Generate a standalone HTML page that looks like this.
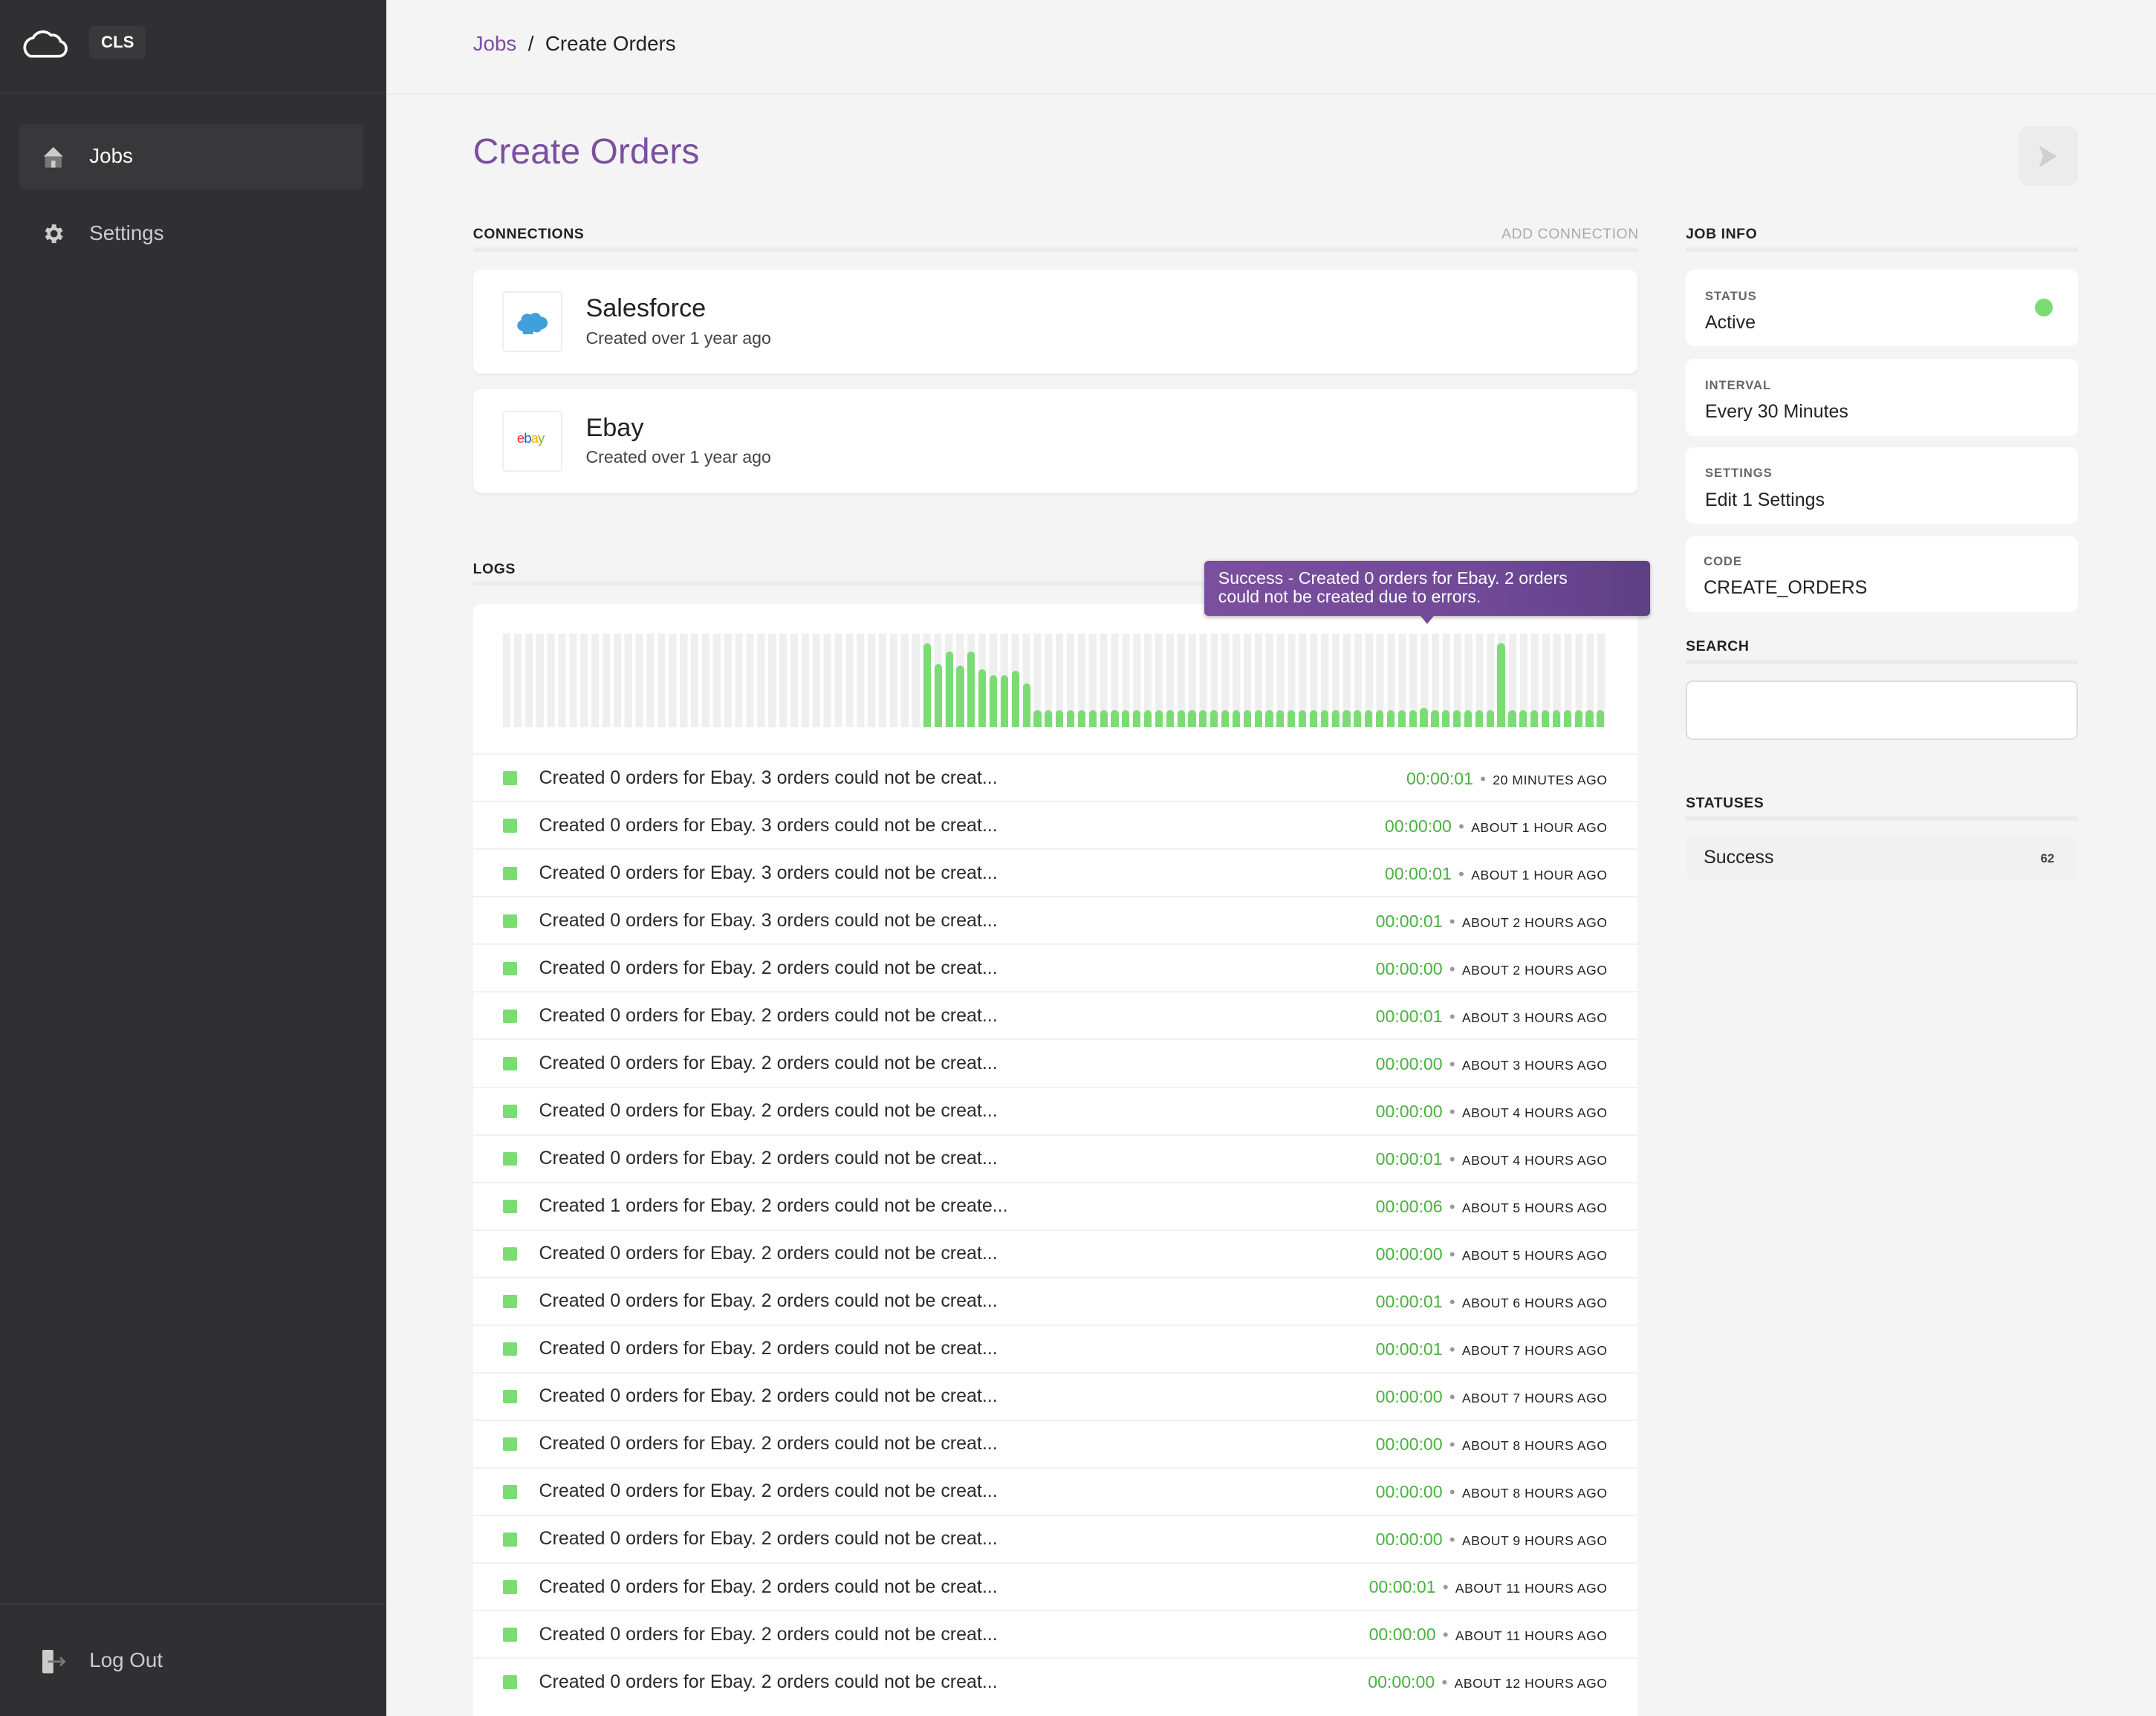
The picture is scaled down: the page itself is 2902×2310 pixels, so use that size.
<!DOCTYPE html>
<html><head><meta charset="utf-8"><style>
*{box-sizing:border-box;margin:0;padding:0}
html,body{width:2902px;height:2310px;overflow:hidden;background:#f4f4f4}
#r{zoom:1.8508;width:1568px;height:1248px;position:relative;font-family:"Liberation Sans",sans-serif;color:#222}
.a{position:absolute}
.sb{left:0;top:0;width:281px;height:1248px;background:#303032}
.lbl{font-size:10.5px;font-weight:bold;letter-spacing:.3px;color:#222}
.card{background:#fff;border-radius:6px}
.row{position:absolute;left:344px;width:847px;height:34.6px;border-top:1.5px solid #f1f1f1;background:#fff}
.row .sq{position:absolute;left:22px;top:12px;width:10px;height:10px;background:#7bdc74;border-radius:1px}
.row .t{position:absolute;left:48px;top:9px;font-size:13.5px;color:#2a2a2a}
.row .r{position:absolute;right:22px;top:10px;font-size:12px;color:#222;white-space:nowrap}
.row .r b{font-weight:normal;color:#49b13f;font-size:12.5px}
.row .r i{font-style:normal;color:#999;margin:0 5px}
.row .r s{text-decoration:none;font-size:9.5px;letter-spacing:.3px}
.g{display:inline-block;width:5.5px;margin-right:2.54px;background:#7bdc74;border-radius:3px 3px 0 0;vertical-align:bottom}
.ic{font-size:9px;color:#666;letter-spacing:.5px;font-weight:bold}
.iv{font-size:13.5px;color:#222;margin-top:6px}
</style></head><body><div id="r">
<div class="a sb">
 <svg class="a" style="left:14px;top:19px" width="36" height="24" viewBox="0 0 36 24"><path d="M8 22 H29 a5.5 5.5 0 0 0 1-10.8 a6 6 0 0 0-7-4.5 a8 8 0 0 0-13 2 A7 7 0 0 0 8 22 Z" fill="none" stroke="#fff" stroke-width="2"/></svg>
 <div class="a" style="left:65px;top:19px;width:41px;height:24px;background:#39393b;border-radius:4px;color:#fff;font-size:12px;font-weight:bold;text-align:center;line-height:24px">CLS</div>
 <div class="a" style="left:0;top:67px;width:281px;height:1px;background:#39393b"></div>
 <div class="a" style="left:14px;top:90px;width:250px;height:48px;background:#38383a;border-radius:4px"></div>
 <svg class="a" style="left:31px;top:106px" width="16" height="17" viewBox="0 0 16 17"><path d="M8 1 L15 8 H1 Z" fill="#ccc"/><rect x="2" y="8" width="12" height="8" fill="#777"/><rect x="6.5" y="11" width="3" height="5" fill="#ccc"/></svg>
 <div class="a" style="left:65px;top:105px;color:#fff;font-size:15px">Jobs</div>
 <svg class="a" style="left:30px;top:161px" width="18" height="18" viewBox="0 0 24 24"><path fill="#ccc" d="M19.4 13a7.5 7.5 0 0 0 0-2l2.1-1.6-2-3.5-2.5 1a7.6 7.6 0 0 0-1.700-1L15 3h-4l-.4 2.900a7.600 7.600 0 0 0-1.700 1l-2.500-1-2 3.500L6.500 11a7.500 7.500 0 0 0 0 2l-2.100 1.600 2 3.500 2.500-1a7.600 7.600 0 0 0 1.700 1L11 21h4l.4-2.900a7.600 7.600 0 0 0 1.700-1l2.500 1 2-3.500zM13 15.500a3.500 3.500 0 1 1 0-7 3.500 3.500 0 0 1 0 7z" transform="translate(-1 0)"/></svg>
 <div class="a" style="left:65px;top:161px;color:#ccc;font-size:15px">Settings</div>
 <div class="a" style="left:0;top:1166px;width:281px;height:1px;background:#39393b"></div>
 <svg class="a" style="left:31px;top:1200px" width="18" height="18" viewBox="0 0 18 18"><rect x="0" y="0" width="8" height="17" rx="1" fill="#ccc"/><path d="M4 8.5 H16 M13 5.5 L16 8.5 L13 11.5" stroke="#777" stroke-width="1.5" fill="none"/></svg>
 <div class="a" style="left:65px;top:1199px;color:#ccc;font-size:15px">Log Out</div>
</div>
<div class="a" style="left:281px;top:68px;width:1287px;height:1px;background:#ebebeb"></div>
<div class="a" style="left:344px;top:23px;font-size:15px"><span style="color:#7b4fa0">Jobs</span> &nbsp;/&nbsp; <span style="color:#222">Create Orders</span></div>
<div class="a" style="left:344px;top:95px;font-size:26px;color:#7b4fa0">Create Orders</div>
<div class="a" style="left:1468px;top:92px;width:43px;height:43px;background:#ececec;border-radius:7px"></div>
<svg class="a" style="left:1480px;top:104px" width="20" height="20" viewBox="0 0 20 20"><path d="M3 2 L16 10 L3 18 L6 10 Z" fill="#cfcfcf"/><path d="M3 2 L6 10 L4.5 6 Z" fill="#555"/></svg>

<div class="a lbl" style="left:344px;top:164px">CONNECTIONS</div>
<div class="a" style="left:1092px;top:164px;font-size:10.5px;color:#aaa;letter-spacing:.3px">ADD CONNECTION</div>
<div class="a" style="left:344px;top:180px;width:847px;height:3px;background:#ebebeb"></div>
<div class="a card" style="left:344px;top:196px;width:847px;height:76px;box-shadow:0 1px 2px rgba(0,0,0,.06)"></div>
<div class="a" style="left:365px;top:212px;width:44px;height:44px;border:1.5px solid #eee;border-radius:3px;background:#fff"></div>
<svg class="a" style="left:375px;top:225px" width="24" height="18" viewBox="0 0 24 18"><path d="M5 16 a4 4 0 0 1-1-7.8 a4.5 4.5 0 0 1 7-4 a4.5 4.5 0 0 1 7.5 1.5 a4.5 4.5 0 0 1 .5 9 a4 4 0 0 1-6 1.5 a4 4 0 0 1-8-.2z" fill="#3fa0dc"/></svg>
<div class="a" style="left:426px;top:214px;font-size:18.5px;color:#222">Salesforce</div>
<div class="a" style="left:426px;top:239px;font-size:12.5px;color:#444">Created over 1 year ago</div>
<div class="a card" style="left:344px;top:283px;width:847px;height:76px;box-shadow:0 1px 2px rgba(0,0,0,.06)"></div>
<div class="a" style="left:365px;top:299px;width:44px;height:44px;border:1.5px solid #eee;border-radius:3px;background:#fff"></div>
<div class="a" style="left:376px;top:313px;font-size:10px;letter-spacing:-.5px"><span style="color:#e53238">e</span><span style="color:#0064d2">b</span><span style="color:#f5af02">a</span><span style="color:#86b817">y</span></div>
<div class="a" style="left:426px;top:301px;font-size:18.5px;color:#222">Ebay</div>
<div class="a" style="left:426px;top:325px;font-size:12.5px;color:#444">Created over 1 year ago</div>

<div class="a lbl" style="left:344px;top:408px">LOGS</div>
<div class="a" style="left:344px;top:423px;width:847px;height:3px;background:#ebebeb"></div>
<div class="a" style="left:344px;top:439px;width:847px;height:820px;background:#fff;border-radius:6px 6px 0 0"></div>
<div class="a" style="left:366px;top:461px;width:804px;height:68px;background:repeating-linear-gradient(to right,#efefef 0 5.5px,transparent 5.5px 8.04px)"></div>
<div class="a" style="left:671.5px;top:461px;width:500px;height:68px;font-size:0;line-height:0;white-space:nowrap;display:flex;align-items:flex-end">
<span class="g" style="height:61px"></span><span class="g" style="height:46px"></span><span class="g" style="height:55px"></span><span class="g" style="height:45px"></span><span class="g" style="height:55px"></span><span class="g" style="height:42px"></span><span class="g" style="height:38px"></span><span class="g" style="height:38px"></span><span class="g" style="height:41px"></span><span class="g" style="height:32px"></span>
<span class="g" style="height:12.5px"></span><span class="g" style="height:12.5px"></span><span class="g" style="height:12.5px"></span><span class="g" style="height:12.5px"></span><span class="g" style="height:12.5px"></span><span class="g" style="height:12.5px"></span><span class="g" style="height:12.5px"></span><span class="g" style="height:12.5px"></span><span class="g" style="height:12.5px"></span><span class="g" style="height:12.5px"></span>
<span class="g" style="height:12.5px"></span><span class="g" style="height:12.5px"></span><span class="g" style="height:12.5px"></span><span class="g" style="height:12.5px"></span><span class="g" style="height:12.5px"></span><span class="g" style="height:12.5px"></span><span class="g" style="height:12.5px"></span><span class="g" style="height:12.5px"></span><span class="g" style="height:12.5px"></span><span class="g" style="height:12.5px"></span>
<span class="g" style="height:12.5px"></span><span class="g" style="height:12.5px"></span><span class="g" style="height:12.5px"></span><span class="g" style="height:12.5px"></span><span class="g" style="height:12.5px"></span><span class="g" style="height:12.5px"></span><span class="g" style="height:12.5px"></span><span class="g" style="height:12.5px"></span><span class="g" style="height:12.5px"></span><span class="g" style="height:12.5px"></span>
<span class="g" style="height:12.5px"></span><span class="g" style="height:12.5px"></span><span class="g" style="height:12.5px"></span><span class="g" style="height:12.5px"></span><span class="g" style="height:12.5px"></span><span class="g" style="height:14px"></span><span class="g" style="height:12.5px"></span><span class="g" style="height:12.5px"></span><span class="g" style="height:12.5px"></span><span class="g" style="height:12.5px"></span>
<span class="g" style="height:12.5px"></span><span class="g" style="height:12.5px"></span><span class="g" style="height:61px"></span><span class="g" style="height:12.5px"></span><span class="g" style="height:12.5px"></span><span class="g" style="height:12.5px"></span><span class="g" style="height:12.5px"></span><span class="g" style="height:12.5px"></span><span class="g" style="height:12.5px"></span><span class="g" style="height:12.5px"></span>
<span class="g" style="height:12.5px"></span><span class="g" style="height:12.5px"></span>
</div>
<div class="a" style="left:876px;top:408px;width:324px;height:40px;background:linear-gradient(90deg,#7a4f9e,#714a98 60%,#5d3f84);border-radius:3px;color:#fff;font-size:12.5px;line-height:13.5px;padding:6px 40px 6px 10px;box-shadow:0 1px 3px rgba(0,0,0,.3)">Success - Created 0 orders for Ebay. 2 orders could not be created due to errors.</div>
<div class="a" style="left:1033px;top:448px;width:0;height:0;border-left:5px solid transparent;border-right:5px solid transparent;border-top:6px solid #734b99"></div>

<div class="row" style="top:548px"><div class="sq"></div><div class="t">Created 0 orders for Ebay. 3 orders could not be creat...</div><div class="r"><b>00:00:01</b><i>•</i><s>20 MINUTES AGO</s></div></div>
<div class="row" style="top:582.6px"><div class="sq"></div><div class="t">Created 0 orders for Ebay. 3 orders could not be creat...</div><div class="r"><b>00:00:00</b><i>•</i><s>ABOUT 1 HOUR AGO</s></div></div>
<div class="row" style="top:617.2px"><div class="sq"></div><div class="t">Created 0 orders for Ebay. 3 orders could not be creat...</div><div class="r"><b>00:00:01</b><i>•</i><s>ABOUT 1 HOUR AGO</s></div></div>
<div class="row" style="top:651.8px"><div class="sq"></div><div class="t">Created 0 orders for Ebay. 3 orders could not be creat...</div><div class="r"><b>00:00:01</b><i>•</i><s>ABOUT 2 HOURS AGO</s></div></div>
<div class="row" style="top:686.4px"><div class="sq"></div><div class="t">Created 0 orders for Ebay. 2 orders could not be creat...</div><div class="r"><b>00:00:00</b><i>•</i><s>ABOUT 2 HOURS AGO</s></div></div>
<div class="row" style="top:721px"><div class="sq"></div><div class="t">Created 0 orders for Ebay. 2 orders could not be creat...</div><div class="r"><b>00:00:01</b><i>•</i><s>ABOUT 3 HOURS AGO</s></div></div>
<div class="row" style="top:755.6px"><div class="sq"></div><div class="t">Created 0 orders for Ebay. 2 orders could not be creat...</div><div class="r"><b>00:00:00</b><i>•</i><s>ABOUT 3 HOURS AGO</s></div></div>
<div class="row" style="top:790.2px"><div class="sq"></div><div class="t">Created 0 orders for Ebay. 2 orders could not be creat...</div><div class="r"><b>00:00:00</b><i>•</i><s>ABOUT 4 HOURS AGO</s></div></div>
<div class="row" style="top:824.8px"><div class="sq"></div><div class="t">Created 0 orders for Ebay. 2 orders could not be creat...</div><div class="r"><b>00:00:01</b><i>•</i><s>ABOUT 4 HOURS AGO</s></div></div>
<div class="row" style="top:859.4px"><div class="sq"></div><div class="t">Created 1 orders for Ebay. 2 orders could not be create...</div><div class="r"><b>00:00:06</b><i>•</i><s>ABOUT 5 HOURS AGO</s></div></div>
<div class="row" style="top:894px"><div class="sq"></div><div class="t">Created 0 orders for Ebay. 2 orders could not be creat...</div><div class="r"><b>00:00:00</b><i>•</i><s>ABOUT 5 HOURS AGO</s></div></div>
<div class="row" style="top:928.6px"><div class="sq"></div><div class="t">Created 0 orders for Ebay. 2 orders could not be creat...</div><div class="r"><b>00:00:01</b><i>•</i><s>ABOUT 6 HOURS AGO</s></div></div>
<div class="row" style="top:963.2px"><div class="sq"></div><div class="t">Created 0 orders for Ebay. 2 orders could not be creat...</div><div class="r"><b>00:00:01</b><i>•</i><s>ABOUT 7 HOURS AGO</s></div></div>
<div class="row" style="top:997.8px"><div class="sq"></div><div class="t">Created 0 orders for Ebay. 2 orders could not be creat...</div><div class="r"><b>00:00:00</b><i>•</i><s>ABOUT 7 HOURS AGO</s></div></div>
<div class="row" style="top:1032.4px"><div class="sq"></div><div class="t">Created 0 orders for Ebay. 2 orders could not be creat...</div><div class="r"><b>00:00:00</b><i>•</i><s>ABOUT 8 HOURS AGO</s></div></div>
<div class="row" style="top:1067px"><div class="sq"></div><div class="t">Created 0 orders for Ebay. 2 orders could not be creat...</div><div class="r"><b>00:00:00</b><i>•</i><s>ABOUT 8 HOURS AGO</s></div></div>
<div class="row" style="top:1101.6px"><div class="sq"></div><div class="t">Created 0 orders for Ebay. 2 orders could not be creat...</div><div class="r"><b>00:00:00</b><i>•</i><s>ABOUT 9 HOURS AGO</s></div></div>
<div class="row" style="top:1136.2px"><div class="sq"></div><div class="t">Created 0 orders for Ebay. 2 orders could not be creat...</div><div class="r"><b>00:00:01</b><i>•</i><s>ABOUT 11 HOURS AGO</s></div></div>
<div class="row" style="top:1170.8px"><div class="sq"></div><div class="t">Created 0 orders for Ebay. 2 orders could not be creat...</div><div class="r"><b>00:00:00</b><i>•</i><s>ABOUT 11 HOURS AGO</s></div></div>
<div class="row" style="top:1205.4px"><div class="sq"></div><div class="t">Created 0 orders for Ebay. 2 orders could not be creat...</div><div class="r"><b>00:00:00</b><i>•</i><s>ABOUT 12 HOURS AGO</s></div></div>

<div class="a lbl" style="left:1226px;top:164px">JOB INFO</div>
<div class="a" style="left:1226px;top:180px;width:285px;height:3px;background:#ebebeb"></div>
<div class="a card" style="left:1226px;top:196px;width:285px;height:56px;padding:14px 14px"><div class="ic">STATUS</div><div class="iv">Active</div></div>
<div class="a" style="left:1480px;top:217px;width:13px;height:13px;border-radius:50%;background:#7bdc74"></div>
<div class="a card" style="left:1226px;top:261px;width:285px;height:56px;padding:14px 14px"><div class="ic">INTERVAL</div><div class="iv">Every 30 Minutes</div></div>
<div class="a card" style="left:1226px;top:325px;width:285px;height:56px;padding:14px 14px"><div class="ic">SETTINGS</div><div class="iv">Edit 1 Settings</div></div>
<div class="a card" style="left:1226px;top:390px;width:285px;height:55px;padding:13px 13px"><div class="ic">CODE</div><div class="iv">CREATE_ORDERS</div></div>
<div class="a lbl" style="left:1226px;top:464px">SEARCH</div>
<div class="a" style="left:1226px;top:480px;width:285px;height:3px;background:#ebebeb"></div>
<div class="a" style="left:1226px;top:495px;width:285px;height:43px;background:#fff;border:1.5px solid #ddd;border-radius:5px"></div>
<div class="a lbl" style="left:1226px;top:578px">STATUSES</div>
<div class="a" style="left:1226px;top:594px;width:285px;height:3px;background:#ebebeb"></div>
<div class="a" style="left:1226px;top:609px;width:285px;height:30px;background:#f1f1f1;border-radius:4px"></div>
<div class="a" style="left:1239px;top:616px;font-size:13.5px;color:#222">Success</div>
<div class="a" style="left:1484px;top:619px;font-size:9px;color:#444;font-weight:bold">62</div>
</div></body></html>
